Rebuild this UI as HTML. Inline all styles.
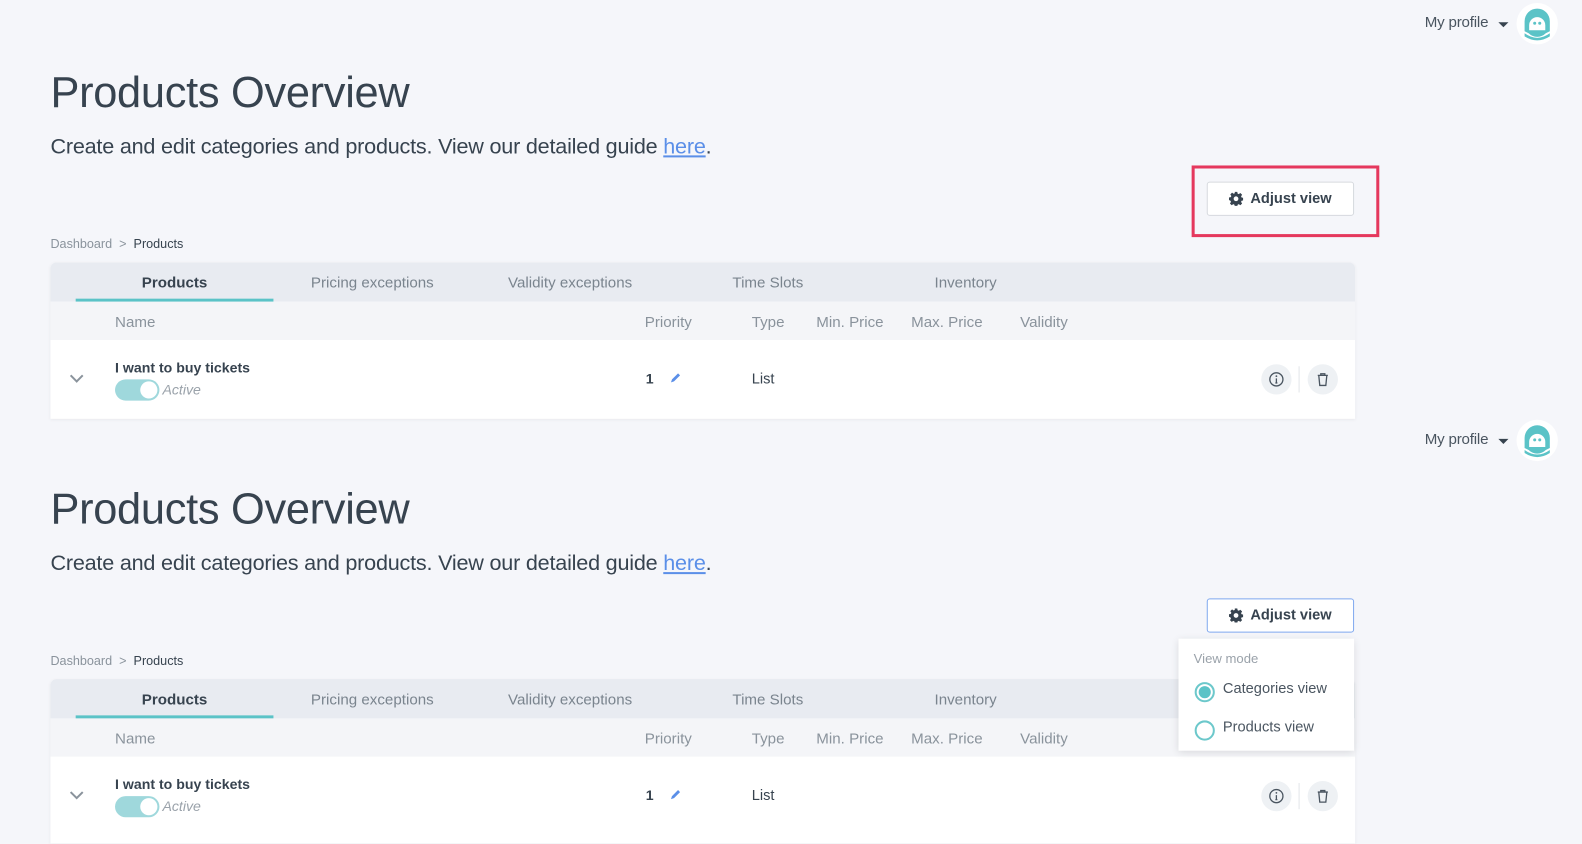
<!DOCTYPE html>
<html><head><meta charset="utf-8"><style>
*{box-sizing:border-box;margin:0;padding:0}
body{width:1582px;height:836px;overflow:hidden;background:#f5f6fa;font-family:"Liberation Sans",sans-serif;color:#37434f;position:relative}
#w{position:absolute;left:0;top:0;width:1568px;height:829px;transform:scale(1.009);transform-origin:0 0}
.blk{position:absolute;left:0;width:1568px;height:415px}
.a{position:absolute;white-space:nowrap}
.title{left:50px;top:68px;font-size:43px;letter-spacing:-0.3px;color:#37434f}
.sub{left:50px;top:133px;font-size:21.4px;letter-spacing:-0.2px;color:#37434f}
.sub u{color:#5b8fe8;text-decoration:underline}
.prof{left:1412px;top:14px;font-size:15px;color:#4a5560;letter-spacing:-0.2px}
.caret{left:1485px;top:22px;width:0;height:0;border-left:5px solid transparent;border-right:5px solid transparent;border-top:5px solid #37434f}
.av{left:1503px;top:3px;width:41px;height:41px;border-radius:50%;background:#fff}
.btn{left:1196px;top:180px;width:146px;height:34px;border:1px solid #d6d9de;border-radius:3px;background:#fff;font-size:14.5px;font-weight:bold;color:#37434f;display:flex;align-items:center;justify-content:center;gap:7px}
.bc{left:50px;top:235px;font-size:12.5px;color:#8a939c}
.bc b{font-weight:normal;color:#37434f}
.card{left:50px;top:260px;width:1293px;height:155px;background:#fff;border-radius:6px 6px 0 0;overflow:hidden;box-shadow:0 1px 3px rgba(0,0,0,.05)}
.tabs{position:absolute;left:0;top:0;width:100%;height:39px;background:#e8ebf1}
.tab{position:absolute;top:12px;font-size:15px;color:#7a848e;transform:translateX(-50%)}
.ul{position:absolute;left:25px;top:36px;width:196px;height:3px;background:#5bc3c7}
.hdr{position:absolute;left:0;top:39px;width:100%;height:38px;background:#f4f5f8}
.h{position:absolute;top:12px;font-size:15px;color:#8a939c}
.row{position:absolute;left:0;top:77px;width:100%;height:78px;background:#fff}
.circ{position:absolute;width:30px;height:30px;border-radius:50%;background:#eef1f4;display:flex;align-items:center;justify-content:center}
.dd{left:1168px;top:220px;width:174px;height:111px;background:#fff;box-shadow:0 2px 8px rgba(0,0,0,.12)}
.rad{position:absolute;left:16px;width:20px;height:20px;border-radius:50%;border:2px solid #6cc8cb}
</style></head><body><div id="w">

<!-- block 1 -->
<div class="blk" style="top:0">
 <div class="a prof">My profile</div><div class="a caret"></div>
 <div class="a av"><svg width="41" height="41" viewBox="0 0 41 41"><path d="M8 28 V18 a12.5 12.5 0 0 1 25 0 V28 L29 30 a12 12 0 0 1-17 0 Z" fill="#5bc3c7"/><path d="M12.5 22 a8 8 0 0 1 16 0 v5 h-16z" fill="#fff"/><circle cx="18" cy="20" r="1.5" fill="#5bc3c7"/><circle cx="23" cy="20" r="1.5" fill="#5bc3c7"/><path d="M8 30 q12.5 9 25 0 v3 q-12.5 8 -25 0z" fill="#5bc3c7"/></svg></div>
 <div class="a title">Products Overview</div>
 <div class="a sub">Create and edit categories and products. View our detailed guide <u>here</u>.</div>
 <div class="a" style="left:1181px;top:164px;width:186px;height:71px;border:3px solid #e5385d"></div>
 <div class="a btn"><svg width="14" height="14" viewBox="0 0 16 16"><path fill="#37434f" d="M6.6 0h2.8l.4 2.1 1.3.6 1.8-1.2 2 2-1.2 1.8.6 1.3 2.1.4v2.8l-2.1.4-.6 1.3 1.2 1.8-2 2-1.8-1.2-1.3.6-.4 2.1H6.6l-.4-2.1-1.3-.6-1.8 1.2-2-2 1.2-1.8-.6-1.3L0 9.4V6.6l2.1-.4.6-1.3-1.2-1.8 2-2 1.8 1.2 1.3-.6zM8 5.3a2.7 2.7 0 1 0 0 5.4 2.7 2.7 0 0 0 0-5.4z"/></svg>Adjust view</div>
 <div class="a bc">Dashboard &nbsp;&gt;&nbsp; <b>Products</b></div>
 <div class="a card">
  <div class="tabs"><span class="tab" style="left:123px;color:#37434f;font-weight:bold">Products</span><span class="tab" style="left:319px">Pricing exceptions</span><span class="tab" style="left:515px">Validity exceptions</span><span class="tab" style="left:711px">Time Slots</span><span class="tab" style="left:907px">Inventory</span><div class="ul"></div></div>
  <div class="hdr"><span class="h" style="left:64px">Name</span><span class="h" style="left:589px">Priority</span><span class="h" style="left:695px">Type</span><span class="h" style="left:759px">Min. Price</span><span class="h" style="left:853px">Max. Price</span><span class="h" style="left:961px">Validity</span></div>
  <div class="row">
   <svg style="position:absolute;left:18px;top:33px" width="16" height="10" viewBox="0 0 16 10"><path d="M2 2l6 6 6-6" fill="none" stroke="#8a939c" stroke-width="2"/></svg>
   <span class="a" style="left:64px;top:19px;font-size:14px;font-weight:bold;color:#37434f">I want to buy tickets</span>
   <div class="a" style="left:64px;top:39px;width:44px;height:21px;border-radius:11px;background:#9fd8dc"><div style="position:absolute;right:2px;top:2px;width:17px;height:17px;border-radius:50%;background:#fff"></div></div>
   <span class="a" style="left:111px;top:41px;font-size:14px;font-style:italic;color:#9aa2aa">Active</span>
   <span class="a" style="left:590px;top:30px;font-size:14px;font-weight:bold">1</span>
   <svg style="position:absolute;left:613px;top:31px" width="13" height="13" viewBox="0 0 13 13"><path d="M2 11l1-3 6-6 2 2-6 6z" fill="#5b8fe8"/></svg>
   <span class="a" style="left:695px;top:31px;font-size:14.5px">List</span>
   <div class="circ" style="left:1200px;top:24px"><svg width="16" height="16" viewBox="0 0 16 16"><circle cx="8" cy="8" r="6.5" fill="none" stroke="#4a5560" stroke-width="1.3"/><path d="M8 7v4.5M7 11.5h2" stroke="#4a5560" stroke-width="1.3"/><circle cx="8" cy="4.8" r=".9" fill="#4a5560"/></svg></div>
   <div class="a" style="left:1237px;top:26px;width:1px;height:26px;background:#e3e6ea"></div>
   <div class="circ" style="left:1246px;top:24px"><svg width="16" height="16" viewBox="0 0 16 16"><path d="M3 4h10M6 4V2.5h4V4M4 4l1 10h6l1-10" fill="none" stroke="#4a5560" stroke-width="1.3"/></svg></div>
  </div>
 </div>
</div>

<!-- block 2 -->
<div class="blk" style="top:413px;height:423px">
 <div class="a prof">My profile</div><div class="a caret"></div>
 <div class="a av"><svg width="41" height="41" viewBox="0 0 41 41"><path d="M8 28 V18 a12.5 12.5 0 0 1 25 0 V28 L29 30 a12 12 0 0 1-17 0 Z" fill="#5bc3c7"/><path d="M12.5 22 a8 8 0 0 1 16 0 v5 h-16z" fill="#fff"/><circle cx="18" cy="20" r="1.5" fill="#5bc3c7"/><circle cx="23" cy="20" r="1.5" fill="#5bc3c7"/><path d="M8 30 q12.5 9 25 0 v3 q-12.5 8 -25 0z" fill="#5bc3c7"/></svg></div>
 <div class="a title">Products Overview</div>
 <div class="a sub">Create and edit categories and products. View our detailed guide <u>here</u>.</div>
 <div class="a btn" style="border-color:#7fa8ef"><svg width="14" height="14" viewBox="0 0 16 16"><path fill="#37434f" d="M6.6 0h2.8l.4 2.1 1.3.6 1.8-1.2 2 2-1.2 1.8.6 1.3 2.1.4v2.8l-2.1.4-.6 1.3 1.2 1.8-2 2-1.8-1.2-1.3.6-.4 2.1H6.6l-.4-2.1-1.3-.6-1.8 1.2-2-2 1.2-1.8-.6-1.3L0 9.4V6.6l2.1-.4.6-1.3-1.2-1.8 2-2 1.8 1.2 1.3-.6zM8 5.3a2.7 2.7 0 1 0 0 5.4 2.7 2.7 0 0 0 0-5.4z"/></svg>Adjust view</div>
 <div class="a bc">Dashboard &nbsp;&gt;&nbsp; <b>Products</b></div>
 <div class="a card" style="height:163px">
  <div class="tabs"><span class="tab" style="left:123px;color:#37434f;font-weight:bold">Products</span><span class="tab" style="left:319px">Pricing exceptions</span><span class="tab" style="left:515px">Validity exceptions</span><span class="tab" style="left:711px">Time Slots</span><span class="tab" style="left:907px">Inventory</span><div class="ul"></div></div>
  <div class="hdr"><span class="h" style="left:64px">Name</span><span class="h" style="left:589px">Priority</span><span class="h" style="left:695px">Type</span><span class="h" style="left:759px">Min. Price</span><span class="h" style="left:853px">Max. Price</span><span class="h" style="left:961px">Validity</span></div>
  <div class="row" style="height:86px">
   <svg style="position:absolute;left:18px;top:33px" width="16" height="10" viewBox="0 0 16 10"><path d="M2 2l6 6 6-6" fill="none" stroke="#8a939c" stroke-width="2"/></svg>
   <span class="a" style="left:64px;top:19px;font-size:14px;font-weight:bold;color:#37434f">I want to buy tickets</span>
   <div class="a" style="left:64px;top:39px;width:44px;height:21px;border-radius:11px;background:#9fd8dc"><div style="position:absolute;right:2px;top:2px;width:17px;height:17px;border-radius:50%;background:#fff"></div></div>
   <span class="a" style="left:111px;top:41px;font-size:14px;font-style:italic;color:#9aa2aa">Active</span>
   <span class="a" style="left:590px;top:30px;font-size:14px;font-weight:bold">1</span>
   <svg style="position:absolute;left:613px;top:31px" width="13" height="13" viewBox="0 0 13 13"><path d="M2 11l1-3 6-6 2 2-6 6z" fill="#5b8fe8"/></svg>
   <span class="a" style="left:695px;top:31px;font-size:14.5px">List</span>
   <div class="circ" style="left:1200px;top:24px"><svg width="16" height="16" viewBox="0 0 16 16"><circle cx="8" cy="8" r="6.5" fill="none" stroke="#4a5560" stroke-width="1.3"/><path d="M8 7v4.5M7 11.5h2" stroke="#4a5560" stroke-width="1.3"/><circle cx="8" cy="4.8" r=".9" fill="#4a5560"/></svg></div>
   <div class="a" style="left:1237px;top:26px;width:1px;height:26px;background:#e3e6ea"></div>
   <div class="circ" style="left:1246px;top:24px"><svg width="16" height="16" viewBox="0 0 16 16"><path d="M3 4h10M6 4V2.5h4V4M4 4l1 10h6l1-10" fill="none" stroke="#4a5560" stroke-width="1.3"/></svg></div>
  </div>
 </div>
 <div class="a dd">
  <span class="a" style="left:15px;top:12px;font-size:13px;color:#9aa2aa">View mode</span>
  <div class="rad" style="top:43px"><div style="position:absolute;left:2px;top:2px;width:12px;height:12px;border-radius:50%;background:#5bc3c7"></div></div>
  <span class="a" style="left:44px;top:42px;font-size:14.5px;color:#4a5560">Categories view</span>
  <div class="rad" style="top:81px"></div>
  <span class="a" style="left:44px;top:80px;font-size:14.5px;color:#4a5560">Products view</span>
 </div>
</div>
</div></body></html>
